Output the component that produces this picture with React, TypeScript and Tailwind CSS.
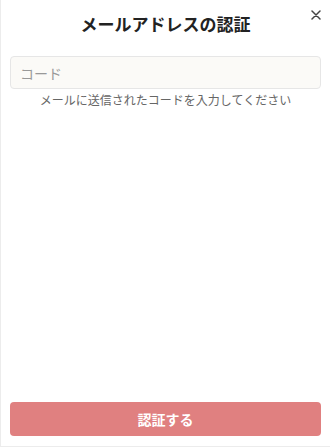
import React from "react";

export default function App() {
  return (
    <div
      className="w-[330px] h-[447px] bg-white flex flex-col border-l border-b border-[#ececec]"
      style={{ fontFamily: '"Noto Sans CJK JP", "Noto Sans", sans-serif' }}
    >
      <div className="relative flex justify-center pt-[11px] h-[45px]">
        <h1 className="text-[17px] font-bold text-[#222] leading-[26px]">メールアドレスの認証</h1>
        <button className="absolute right-[9px] top-[10px] text-[#444]">
          <svg width="10" height="10" viewBox="0 0 10 10" fill="none" stroke="currentColor" strokeWidth="1.5" strokeLinecap="round">
            <path d="M1 1 L9 9 M9 1 L1 9" />
          </svg>
        </button>
      </div>
      <div className="px-[9px] pt-[11px]">
        <input
          placeholder="コード"
          className="w-full h-[33px] rounded-[4px] border border-[#e6e6e6] bg-[#fbfaf7] px-[9px] text-[14px] text-[#333] placeholder:text-[#999] outline-none"
        />
        <p className="mt-[2px] text-center text-[12px] text-[#666] leading-[18px]">メールに送信されたコードを入力してください</p>
      </div>
      <div className="flex-1" />
      <div className="px-[9px] pb-[10px]">
        <button className="w-full h-[34px] rounded-[4px] bg-[#e08080] text-white text-[14px] font-bold">認証する</button>
      </div>
    </div>
  );
}
